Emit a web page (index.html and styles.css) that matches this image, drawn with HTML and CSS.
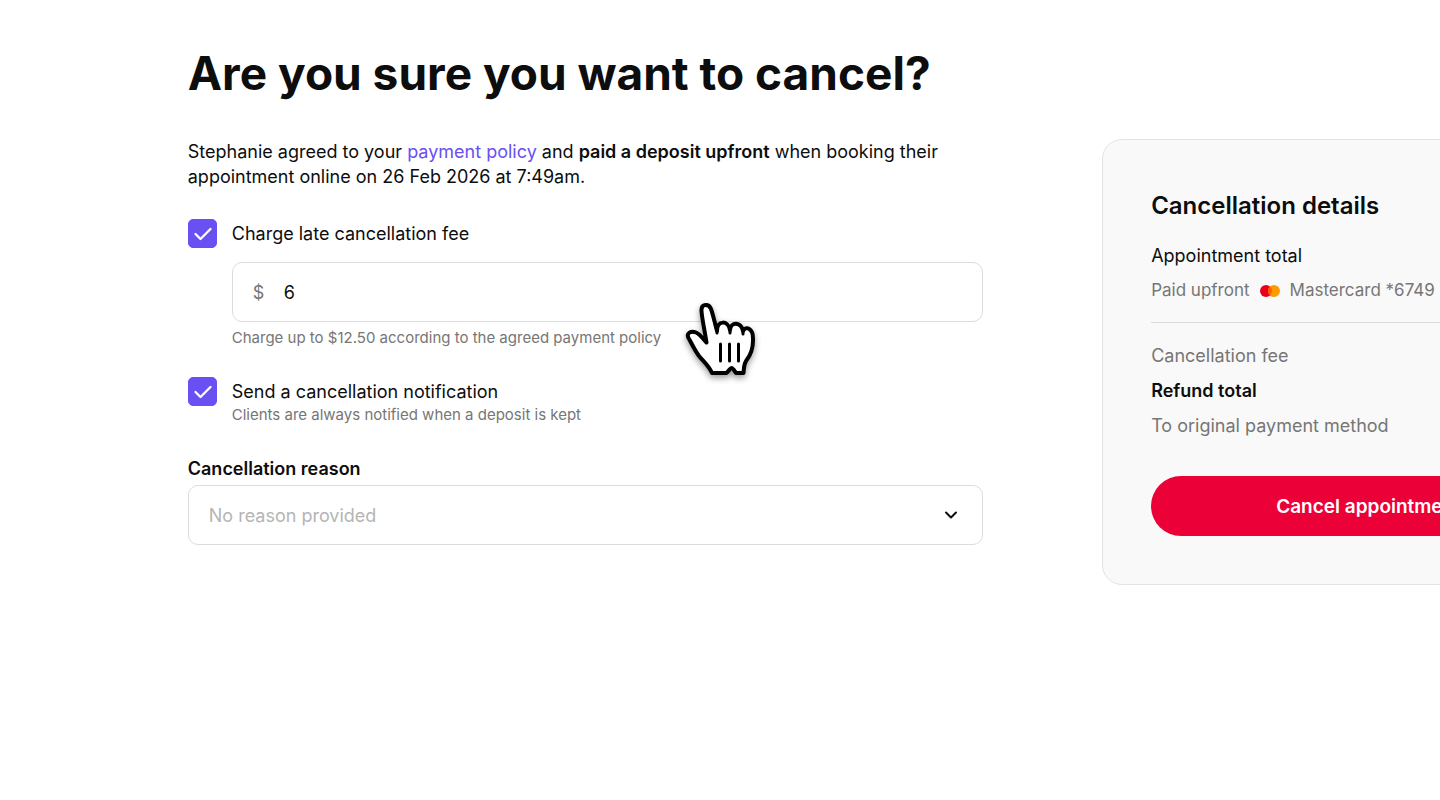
FILE: index.html
```html
<!DOCTYPE html>
<html lang="en">
<head>
<meta charset="utf-8">
<meta name="viewport" content="width=device-width, initial-scale=1">
<title>Cancel appointment</title>
<link rel="stylesheet" href="styles.css">
</head>
<body>
<div class="page">
  <h1 class="title">Are you sure you want to cancel?</h1>
  <div class="layout">
    <main class="form">
      <p class="intro">Stephanie agreed to your <a class="link" href="#">payment policy</a> and <strong>paid a deposit upfront</strong> when booking their appointment online on 26 Feb 2026 at 7:49am.</p>

      <div class="option">
        <input class="check" type="checkbox" id="fee" checked>
        <label class="option-label" for="fee">Charge late cancellation fee</label>
      </div>
      <div class="fee">
        <div class="money">
          <span class="currency">$</span>
          <input class="amount" type="text" inputmode="decimal" value="6" aria-label="Cancellation fee amount" aria-describedby="fee-hint">
          <svg class="pointer" viewBox="0 0 100 100" aria-hidden="true">
            <path class="hand" d="M42 82 C39 75 33 70 29 65 C24 58 21 51 18.500 47 C16 42 21 39.500 26 41.500 C30 43 33 48 36.500 51.500 C35 41 32 28 31.500 20 C31 12 39 12.500 41 18 C43.500 25 45 33 47 40 C47 29 58 29 60 39 C61 30 71 31 73 40 C76 34 83 38 83 47 C83.500 58 80 65 76 70 C73.500 74 74 78 73.500 82 L66 82 C64 79 63 77 61.500 77 C60 77 59 80 56.500 82 Z"/>
            <path class="crease" d="M47 36v6M60 36v6M73 38v5M50.500 53v17M59.500 53v17M68.500 53v17"/>
          </svg>
        </div>
        <p class="hint" id="fee-hint">Charge up to $12.50 according to the agreed payment policy</p>
      </div>

      <div class="option">
        <input class="check" type="checkbox" id="notify" aria-describedby="notify-hint" checked>
        <div class="option-text">
          <label class="option-label" for="notify">Send a cancellation notification</label>
          <p class="hint" id="notify-hint">Clients are always notified when a deposit is kept</p>
        </div>
      </div>

      <div class="reason">
        <label class="reason-label" for="reason">Cancellation reason</label>
        <div class="select-wrap">
          <select class="select" id="reason"><option>No reason provided</option></select>
          <svg class="chevron" viewBox="0 0 14 8" aria-hidden="true"><path d="M2 1.500 7 6.500 12 1.500"/></svg>
        </div>
      </div>
    </main>

    <aside class="card">
      <h2 class="card-title">Cancellation details</h2>
      <p class="line">Appointment total</p>
      <p class="line muted paid">Paid upfront
        <svg class="mastercard" viewBox="0 0 20 12" role="img" aria-label="Mastercard logo"><circle cx="6" cy="6" r="6" fill="#eb001b"/><circle cx="14" cy="6" r="6" fill="#ff9a00"/><path d="M10 1.500a6 6 0 0 1 0 9a6 6 0 0 1 0-9z" fill="#ff5f00"/></svg>
        Mastercard *6749</p>
      <hr class="rule">
      <p class="line muted">Cancellation fee</p>
      <p class="line strong">Refund total</p>
      <p class="line muted">To original payment method</p>
      <button class="cancel" type="button">Cancel appointment</button>
    </aside>
  </div>
</div>
</body>
</html>
```
FILE: styles.css
```css
* { box-sizing: border-box; }

body {
  margin: 0;
  background: #fff;
  color: #0d0d0d;
  font: 18px/25px Inter, "Liberation Sans", sans-serif;
}

h1, h2, p { margin: 0; }

.page {
  min-height: 100vh;
  padding: 43px 0 48px 13.04vw;
  overflow: hidden;
}

.title {
  margin-bottom: 36px;
  font-size: 46px;
  line-height: 60px;
  font-weight: 700;
}

.layout {
  display: grid;
  grid-template-columns: 55.25vw 37vw;
  column-gap: 8.25vw;
  align-items: start;
}

.intro { margin-bottom: 30px; }

strong { font-weight: 600; }

.link {
  color: #6950f3;
  text-decoration: none;
}

.option {
  display: flex;
  align-items: flex-start;
  gap: 15px;
}

.option-label {
  display: block;
  line-height: 29px;
}

.check {
  appearance: none;
  flex: none;
  width: 29px;
  height: 29px;
  margin: 0;
  border: 1px solid #6950f3;
  border-radius: 5px;
}

.check:checked {
  background: #6950f3 url("data:image/svg+xml,%3Csvg xmlns='http://www.w3.org/2000/svg' viewBox='0 0 29 29'%3E%3Cpath d='M7.500 15l5 5L22.500 10' fill='none' stroke='white' stroke-width='2.300' stroke-linecap='round' stroke-linejoin='round'/%3E%3C/svg%3E") center / 29px 29px no-repeat;
}

.fee {
  margin: 14px 0 30px 44px;
}

.money {
  position: relative;
  display: flex;
  align-items: center;
  height: 60px;
  padding: 0 20px;
  border: 1px solid #dcdcdc;
  border-radius: 10px;
}

.currency {
  width: 31px;
  color: #767676;
}

.amount {
  flex: 1;
  min-width: 0;
  height: 100%;
  padding: 0;
  border: 0;
  outline: 0;
  background: none;
  color: inherit;
  font: inherit;
}

.pointer {
  position: absolute;
  top: 28px;
  left: 437px;
  width: 100px;
  height: 100px;
  pointer-events: none;
  filter: drop-shadow(0 3px 3px rgba(0, 0, 0, .4));
}

.hand {
  fill: #fff;
  stroke: #000;
  stroke-width: 4;
  stroke-linejoin: round;
}

.crease {
  fill: none;
  stroke: #000;
  stroke-width: 3;
  stroke-linecap: round;
}

.hint {
  color: #767676;
  font-size: 15px;
  line-height: 18px;
}

.fee .hint { margin-top: 7px; }

.reason { margin-top: 32px; }

.reason-label {
  display: block;
  margin-bottom: 4px;
  font-weight: 600;
}

.select-wrap {
  display: grid;
  align-items: center;
}

.select,
.chevron { grid-area: 1 / 1; }

.select {
  appearance: none;
  width: 100%;
  height: 60px;
  padding: 0 48px 0 20px;
  border: 1px solid #dcdcdc;
  border-radius: 10px;
  background: #fff;
  color: #b5b5b5;
  font: inherit;
}

.chevron {
  justify-self: end;
  width: 14px;
  height: 8px;
  margin-right: 25px;
  fill: none;
  stroke: #0d0d0d;
  stroke-width: 2;
  stroke-linecap: round;
  stroke-linejoin: round;
  pointer-events: none;
}

.card {
  padding: 48px;
  border: 1px solid #e3e3e3;
  border-radius: 20px;
  background: #f9f9f9;
}

.card-title {
  margin-bottom: 19px;
  font-size: 24px;
  line-height: 36px;
  font-weight: 600;
}

.line {
  margin-bottom: 10px;
  white-space: nowrap;
}

.muted { color: #767676; }

.strong { font-weight: 600; }

.paid {
  display: flex;
  align-items: center;
  gap: 10px;
  font-size: 17px;
}

.mastercard {
  width: 20px;
  height: 12px;
}

.rule {
  margin: 19px 0 20px;
  border: 0;
  border-top: 1px solid #dcdcdc;
}

.cancel {
  width: 100%;
  height: 60px;
  margin-top: 28px;
  border: 0;
  border-radius: 30px;
  background: #eb0037;
  color: #fff;
  font: inherit;
  font-size: 19px;
  font-weight: 600;
}
```
